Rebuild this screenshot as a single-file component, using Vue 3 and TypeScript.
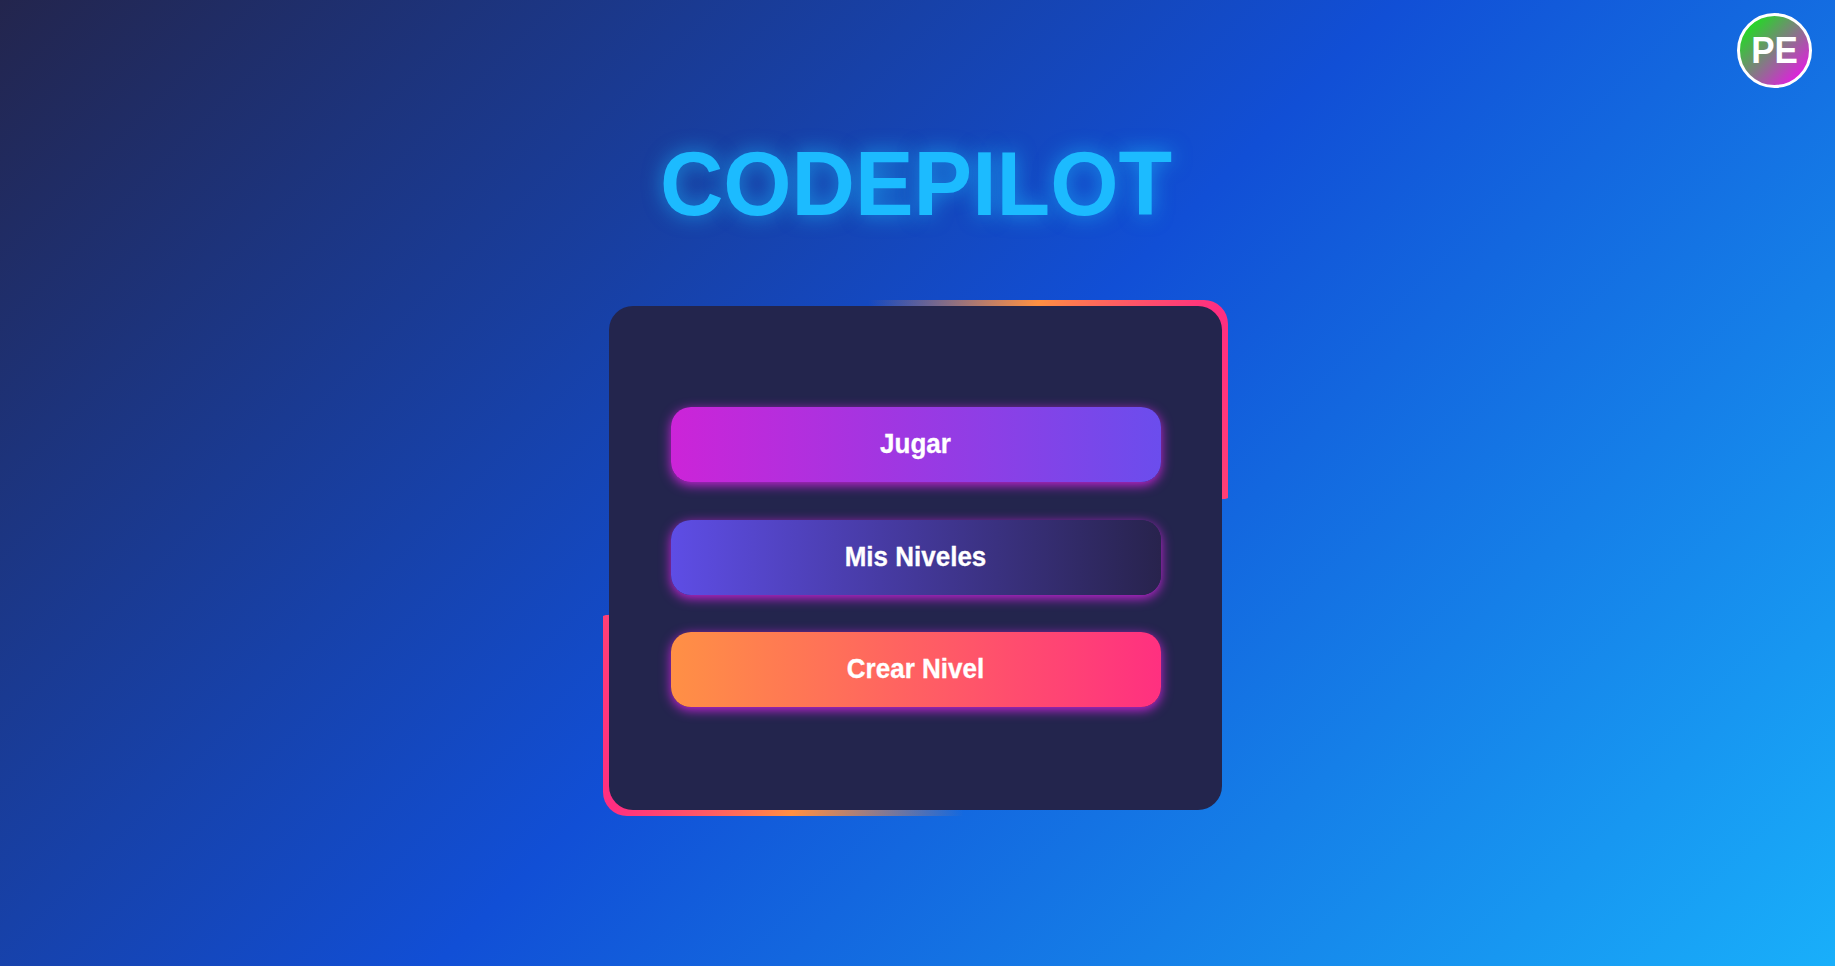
<script setup lang="ts">
interface MenuItem {
  label: string
  variant: string
}

const items: MenuItem[] = [
  { label: 'Jugar', variant: 'play' },
  { label: 'Mis Niveles', variant: 'levels' },
  { label: 'Crear Nivel', variant: 'create' },
]
</script>

<template>
  <main class="page">
    <div class="avatar"><span>PE</span></div>
    <h1 class="title">CODEPILOT</h1>
    <div class="frame">
      <nav class="card">
        <button v-for="item in items" :key="item.label" class="btn" :class="item.variant">
          <span>{{ item.label }}</span>
        </button>
      </nav>
    </div>
  </main>
</template>

<style>
body {
  margin: 0;
}
</style>

<style scoped>
.page {
  position: relative;
  box-sizing: border-box;
  height: 100vh;
  overflow: hidden;
  display: flex;
  flex-direction: column;
  align-items: center;
  padding-top: 132px;
  font-family: 'Liberation Sans', Arial, sans-serif;
  background: linear-gradient(135deg, #23254d 0%, #114fd6 50%, #19affa 100%);
}

.avatar {
  position: absolute;
  top: 13px;
  right: 23px;
  box-sizing: border-box;
  width: 75px;
  height: 75px;
  display: flex;
  align-items: center;
  justify-content: center;
  border: 3px solid #fff;
  border-radius: 50%;
  background: linear-gradient(135deg, #24d826 14%, #dd22dc 86%);
  color: #fff;
  font-size: 35px;
  font-weight: 700;
}

.avatar span,
.btn span {
  display: block;
  transform: scaleY(1.04);
}

.btn span {
  -webkit-text-stroke: 0.3px #fff;
}

.title {
  margin: 0 3px 0 0;
  height: 168px;
  line-height: 101px;
  font-size: 87.8px;
  font-weight: 700;
  color: #1cbbff;
  text-shadow: 0 0 20px rgba(28, 187, 255, 0.65);
  transform: translateY(1px) scaleY(1.04);
  transform-origin: 0 30px;
}

.frame {
  box-sizing: border-box;
  width: 625px;
  height: 516px;
  margin-right: 4px;
  padding: 6px;
  border-radius: 24px;
  background: repeating-conic-gradient(
    from -10.6deg at 50% 257px,
    rgba(255, 144, 66, 0) 0deg,
    #ff9042 36.4deg,
    #ff2e80 61deg,
    #ff3f76 89.9deg,
    transparent 90deg,
    transparent 180deg
  );
}

.card {
  box-sizing: border-box;
  height: 100%;
  display: flex;
  flex-direction: column;
  align-items: center;
  justify-content: center;
  gap: 37.5px;
  padding: 0 0 1.5px 1px;
  border-radius: 24px;
  background: #23254d;
}

.btn {
  width: 490px;
  height: 75px;
  padding: 0 1px 0 0;
  border: 0;
  border-radius: 20px;
  font: 700 26px 'Liberation Sans', Arial, sans-serif;
  color: #fff;
  box-shadow: 0 3px 12px #c724d8;
}

.play {
  background: linear-gradient(90deg, #cc24d8, #6b4ded);
}

.levels {
  background: linear-gradient(90deg, #5e4de5, #28234d);
}

.create {
  background: linear-gradient(90deg, #ff9045, #ff3080);
}
</style>
